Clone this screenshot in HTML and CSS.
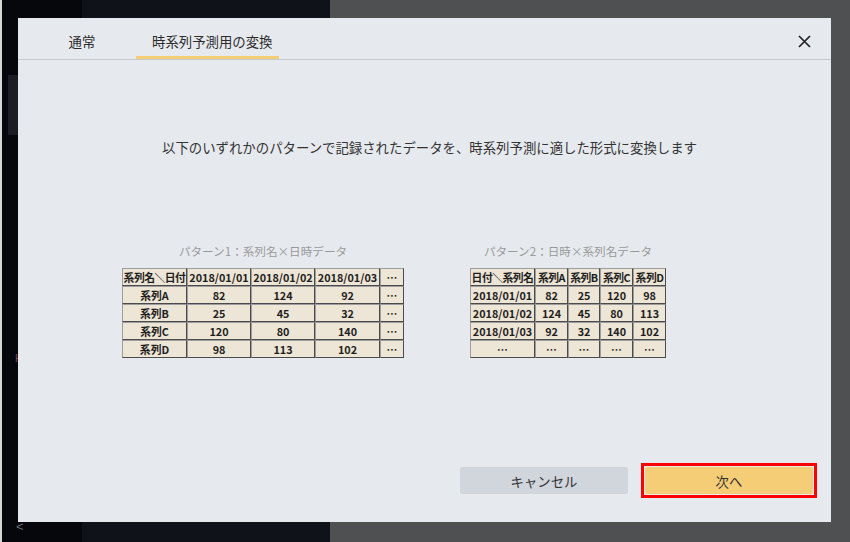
FILE: index.html
```html
<!DOCTYPE html>
<html lang="ja">
<head>
<meta charset="utf-8">
<title>時系列予測用の変換</title>
<link rel="stylesheet" href="styles.css">
</head>
<body>
<div class="desktop">
  <div class="col col-a">
    <div class="side-strip"></div>
    <span class="mark-h">H</span>
    <span class="chev">&lt;</span>
  </div>
  <div class="col col-b"></div>
  <div class="col col-c"></div>

  <div class="dialog">
    <div class="dlg-header">
      <div class="tabs">
        <div class="tab tab-plain">通常</div>
        <div class="tab tab-active">時系列予測用の変換</div>
      </div>
      <button class="close" aria-label="閉じる">
        <svg width="13" height="13" viewBox="0 0 13 13"><path d="M1 1 L12 12 M12 1 L1 12" stroke="#222" stroke-width="1.7" fill="none"/></svg>
      </button>
    </div>

    <div class="dlg-body">
      <p class="lead">以下のいずれかのパターンで記録されたデータを、時系列予測に適した形式に変換します</p>
      <div class="patterns">
        <div class="pattern">
          <div class="caption">パターン1：系列名×日時データ</div>
          <table class="grid grid1">
            <tr><td class="w65 hd">系列名＼日付</td><td class="w64">2018/01/01</td><td class="w64">2018/01/02</td><td class="w65">2018/01/03</td><td class="w23">…</td></tr>
            <tr><td>系列A</td><td>82</td><td>124</td><td>92</td><td>…</td></tr>
            <tr><td>系列B</td><td>25</td><td>45</td><td>32</td><td>…</td></tr>
            <tr><td>系列C</td><td>120</td><td>80</td><td>140</td><td>…</td></tr>
            <tr><td>系列D</td><td>98</td><td>113</td><td>102</td><td>…</td></tr>
          </table>
        </div>
        <div class="pattern">
          <div class="caption">パターン2：日時×系列名データ</div>
          <table class="grid grid2">
            <tr><td class="w65 hd">日付＼系列名</td><td class="w33 hd">系列A</td><td class="w32 hd">系列B</td><td class="w33 hd">系列C</td><td class="w33 hd">系列D</td></tr>
            <tr><td>2018/01/01</td><td>82</td><td>25</td><td>120</td><td>98</td></tr>
            <tr><td>2018/01/02</td><td>124</td><td>45</td><td>80</td><td>113</td></tr>
            <tr><td>2018/01/03</td><td>92</td><td>32</td><td>140</td><td>102</td></tr>
            <tr><td>…</td><td>…</td><td>…</td><td>…</td><td>…</td></tr>
          </table>
        </div>
      </div>
    </div>

    <div class="dlg-footer">
      <button class="btn btn-cancel">キャンセル</button>
      <span class="highlight"><button class="btn btn-next">次へ</button></span>
    </div>
  </div>
</div>
</body>
</html>
```

FILE: styles.css
```css
* { box-sizing: border-box; }
html, body { margin: 0; padding: 0; }
body {
  width: 850px;
  height: 542px;
  overflow: hidden;
  font-family: "Noto Sans CJK JP", "Noto Sans", sans-serif;
  color: #333;
}
.desktop {
  position: relative;
  width: 850px;
  height: 542px;
  display: flex;
  border-left: 2px solid #d6d6d6;
}
.col { height: 100%; position: relative; }
.col-a { width: 80px; background: #05070d; }
.col-b { width: 248px; background: #10121a; }
.col-c { flex: 1; background: #4f5052; }

.side-strip {
  position: absolute;
  left: 6px; top: 75px;
  width: 12px; height: 60px;
  background: #1b1c24;
}
.mark-h {
  position: absolute;
  left: 13px; top: 352px;
  font: 11px "Liberation Sans", sans-serif;
  color: #8a4656;
}
.chev {
  position: absolute;
  left: 14px; top: 519px;
  font: 13px "Liberation Sans", sans-serif;
  color: #6a6d75;
}

.dialog {
  position: absolute;
  left: 16px; top: 18px;
  width: 813px; height: 504px;
  background: #e6e9ee;
  display: flex;
  flex-direction: column;
}
.dlg-header {
  height: 42px;
  border-bottom: 1px solid #c6c9ce;
  display: flex;
  justify-content: space-between;
  align-items: stretch;
  padding: 0 20px 0 34px;
}
.tabs { display: flex; gap: 24px; }
.tab {
  font-size: 13.4px;
  line-height: 20px;
  padding-top: 13px;
  border-bottom: 3px solid transparent;
  color: #2c2c2c;
}
.tab-plain { width: 60px; text-align: center; }
.tab-active {
  width: 143px;
  padding-left: 16px;
  border-bottom-color: #f5cd75;
}
.close {
  background: none;
  border: 0;
  padding: 0;
  margin-top: 17px;
  width: 13px; height: 13px;
  cursor: pointer;
}
.close svg { display: block; }

.dlg-body {
  flex: 1;
  padding-top: 77px;
}
.lead {
  margin: 0;
  padding-left: 10px;
  text-align: center;
  font-size: 13.4px;
  line-height: 20px;
  color: #333;
}
.patterns {
  display: flex;
  gap: 66px;
  padding-left: 104px;
  margin-top: 86px;
  align-items: flex-start;
}
.pattern { display: flex; flex-direction: column; align-items: center; }
.caption {
  font-size: 11.6px;
  line-height: 16px;
  color: #999;
  margin-bottom: 9px;
}
.grid {
  border-collapse: separate;
  border-spacing: 0;
  table-layout: fixed;
}
.grid1 { width: 282px; }
.grid2 { width: 196px; }
.grid td {
  background: #ede5d5;
  border: 1px solid;
  border-color: #9d9d9d #4b4b4b #4b4b4b #9d9d9d;
  padding: 0;
  height: 16.6px;
  font-size: 10.8px;
  line-height: 16px;
  font-weight: 700;
  text-align: center;
  color: #1e1e1e;
  white-space: nowrap;
  overflow: hidden;
}
.grid td.hd { letter-spacing: -0.5px; }
.w65 { width: 65px; }
.w64 { width: 64px; }
.w33 { width: 33px; }
.w32 { width: 32px; }
.w23 { width: 24px; }

.dlg-footer {
  display: flex;
  justify-content: flex-end;
  align-items: center;
  gap: 13px;
  padding: 0 14px 24px 0;
}
.btn {
  display: block;
  width: 168px;
  height: 27px;
  border: 0;
  border-radius: 2px;
  font-family: "Noto Sans CJK JP", sans-serif;
  font-size: 13.4px;
  color: #333;
  padding: 0;
}
.btn-cancel { background: #d1d5dc; }
.highlight {
  display: block;
  border: 3px solid #ff0000;
  padding: 1px;
}
.btn-next { background: #f5cd77; }
```
